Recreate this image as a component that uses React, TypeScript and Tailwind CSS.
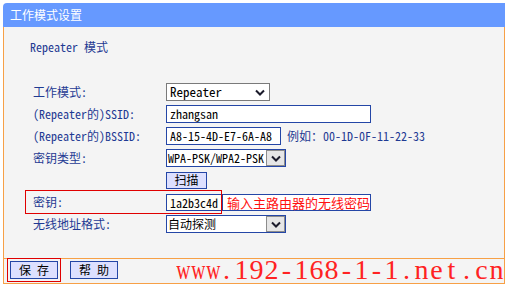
import React from "react";

const Chevron = () => (
  <svg width="10" height="7" viewBox="0 0 10 7">
    <path d="M1 1.5 L5 5.5 L9 1.5" fill="none" stroke="#1b1b2b" strokeWidth="2" />
  </svg>
);

// monospace Latin + full-width CJK, like the old router pages
const mono = "font-['Noto_Sans_Mono_CJK_SC','Noto_Sans_CJK_SC',monospace]";

const Row = ({ label, children }: { label: React.ReactNode; children: React.ReactNode }) => (
  <div className="flex h-[18px] items-center">
    <div className="w-[162px] pl-[29px] text-[12px] leading-[18px] text-[#1f3a93] whitespace-nowrap">{label}</div>
    <div className="flex items-center">{children}</div>
  </div>
);

const BoxSelect = ({ value }: { value: string }) => (
  <div className="flex h-[18px] w-[120px] items-center border border-[#2446a6] bg-white">
    <span className="flex-1 pl-[1px] text-[12px] leading-[16px] text-black whitespace-nowrap overflow-hidden">{value}</span>
    <span className="flex h-[16px] w-[19px] items-center justify-center border border-[#8c8c8c] bg-[#e6e6e6]">
      <Chevron />
    </span>
  </div>
);

const watermark = "www.192-168-1-1.net.cn".split("");

export default function App() {
  return (
    <div className={`w-[508px] h-[287px] bg-white overflow-hidden ${mono}`}>
      <div className="ml-[3px] mt-[3px] w-[502px]">
        {/* title */}
        <div className="h-[24px] rounded-tl-[4px] bg-[#6699ff] pl-[7px] text-[12px] leading-[24px] text-white">
          工作模式设置
        </div>

        {/* body */}
        <div className="relative h-[232px] border-x border-b border-[#f7a046] bg-[#f4f4f4]">
          <div className="pl-[26px] pt-[11px] text-[12px] leading-[18px] text-[#1f3a93]">Repeater 模式</div>

          <div className="mt-[27px] flex flex-col gap-[4px]">
            <Row label="工作模式:">
              <div className="flex h-[18px] w-[104px] items-center justify-between border border-[#7a7a7a] bg-white pl-[3px] pr-[4px] text-[13px] text-black">
                <span>Repeater</span>
                <Chevron />
              </div>
            </Row>
            <Row label="(Repeater的)SSID:">
              <div className="h-[18px] w-[205px] border border-[#2446a6] bg-white pl-[3px] text-[12px] leading-[16px] text-black">zhangsan</div>
            </Row>
            <Row label="(Repeater的)BSSID:">
              <div className="h-[18px] w-[115px] border border-[#2446a6] bg-white pl-[3px] text-[12px] leading-[16px] text-black">A8-15-4D-E7-6A-A8</div>
              <span className="ml-[6px] text-[12px] text-[#1f3a93] whitespace-nowrap">例如：00-1D-0F-11-22-33</span>
            </Row>
            <Row label="密钥类型:">
              <BoxSelect value="WPA-PSK/WPA2-PSK" />
            </Row>
            <Row label="">
              <button className="flex h-[17px] w-[41px] items-center justify-center border border-[#2446a6] bg-[#dde0ff] text-[12px] text-black">
                扫描
              </button>
            </Row>
            <Row label="密钥:">
              <div className="flex h-[17px] w-[205px] items-center border border-[#2446a6] bg-white">
                <span className="h-full w-[56px] border-r border-[#2446a6] bg-[#fffef6] pl-[3px] text-[12px] leading-[15px] text-black">1a2b3c4d</span>
                <span className="pl-[4px] text-[13px] leading-[15px] text-[#ff1010] whitespace-nowrap">输入主路由器的无线密码</span>
              </div>
            </Row>
            <Row label="无线地址格式:">
              <BoxSelect value="自动探测" />
            </Row>
          </div>

          {/* annotation around key row */}
          <div className="absolute left-[21px] top-[163px] h-[24px] w-[197px] border border-[#e00000]" />
        </div>

        {/* bottom bar */}
        <div className="relative flex h-[25px] items-start gap-[12px] border-x border-b border-[#f7a046] bg-[#f4f4f4] pl-[6px] pt-[2px]">
          <button className="h-[18px] w-[48px] border border-[#2446a6] bg-[#dde0ff] text-[12px] leading-[16px] text-black">保 存</button>
          <button className="h-[18px] w-[48px] border border-[#2446a6] bg-[#dde0ff] text-[12px] leading-[16px] text-black">帮 助</button>
          <div className="absolute left-[3px] top-[-1px] h-[24px] w-[54px] border border-[#e00000]" />
          <div className="absolute left-[170px] top-[-2px] flex h-[26px] items-center font-['Liberation_Serif',serif] text-[28px] leading-[26px] text-[#ff2222]">
            {watermark.map((c, i) => (
              <span key={i} className={c === "w" ? "inline-block w-[15px] scale-x-70 text-center" : "inline-block w-[15px] text-center"}>
                {c}
              </span>
            ))}
          </div>
        </div>
      </div>
    </div>
  );
}
